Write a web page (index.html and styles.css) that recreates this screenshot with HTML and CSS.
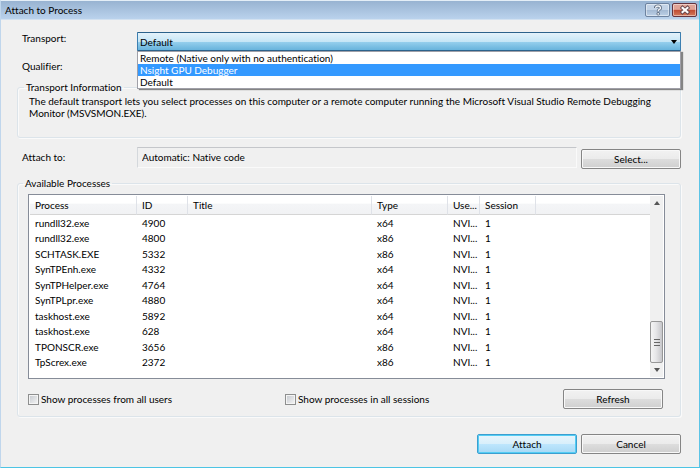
FILE: index.html
```html
<!doctype html>
<html lang="en">

    <head>
        <meta charset="UTF-8" />
        <title>Attach to Process</title>
        <link rel="stylesheet" href="styles.css">
    </head>

    <body>
        <form class="dialog">
            <div class="title_bar">
                <span>Attach to Process</span>
                <button type="button" class="win_btn help" aria-label="Help">
                    <svg width="12" height="12" viewBox="0 0 12 12">
                        <path d="M3.5 4V3.5Q3.8 2 6 2T8.5 3.9Q8.5 4.8 7.2 5.5 6.2 6 6.2 7.4" fill="none" stroke="#5c6a7e" stroke-width="3" />
                        <circle cx="6.2" cy="9.8" r="1.7" fill="#5c6a7e" />
                        <path d="M3.5 3.8Q3.8 2 6 2T8.5 3.9Q8.5 4.8 7.2 5.5 6.2 6 6.2 7.2" fill="none" stroke="#f4f7fb" stroke-width="1.4" />
                        <circle cx="6.2" cy="9.8" r="0.9" fill="#f4f7fb" />
                    </svg>
                </button>
                <button type="button" class="win_btn close" aria-label="Close">
                    <svg width="12" height="10" viewBox="0 0 12 10">
                        <path d="M3.5 2.8L8.5 7.2M8.5 2.8L3.5 7.2" stroke="#6b4a50" stroke-width="3.8" stroke-linecap="square" />
                        <path d="M3.5 2.8L8.5 7.2M8.5 2.8L3.5 7.2" stroke="#fff" stroke-width="2" stroke-linecap="square" />
                    </svg>
                </button>
            </div>

            <div class="content">
                <div class="field transport">
                    <label for="transport">Transport:</label>
                    <div class="combo">
                        <select id="transport">
                            <option>Default</option>
                        </select>
                        <ul class="drop_list">
                            <li>Remote (Native only with no authentication)</li>
                            <li class="active">Nsight GPU Debugger</li>
                            <li>Default</li>
                        </ul>
                    </div>
                </div>
                <div class="field qualifier">
                    <span>Qualifier:</span>
                </div>

                <fieldset class="info">
                    <legend>Transport Information</legend>
                    <p>The default transport lets you select processes on this computer or a remote computer running the Microsoft Visual Studio Remote Debugging Monitor (MSVSMON.EXE).</p>
                </fieldset>

                <div class="field attach_to">
                    <label for="attach">Attach to:</label>
                    <input type="text" id="attach" value="Automatic: Native code" readonly />
                    <button type="button" class="btn">Select...</button>
                </div>

                <fieldset class="processes">
                    <legend>Available Processes</legend>
                    <div class="list_view">
                        <table>
                            <thead>
                                <tr>
                                    <th class="name">Process</th>
                                    <th class="pid">ID</th>
                                    <th class="caption">Title</th>
                                    <th class="type">Type</th>
                                    <th class="user">Use...</th>
                                    <th class="session">Session</th>
                                    <th></th>
                                </tr>
                            </thead>
                            <tbody>
                                <tr><td>rundll32.exe</td><td>4900</td><td></td><td>x64</td><td>NVI...</td><td>1</td><td></td></tr>
                                <tr><td>rundll32.exe</td><td>4800</td><td></td><td>x86</td><td>NVI...</td><td>1</td><td></td></tr>
                                <tr><td>SCHTASK.EXE</td><td>5332</td><td></td><td>x86</td><td>NVI...</td><td>1</td><td></td></tr>
                                <tr><td>SynTPEnh.exe</td><td>4332</td><td></td><td>x64</td><td>NVI...</td><td>1</td><td></td></tr>
                                <tr><td>SynTPHelper.exe</td><td>4764</td><td></td><td>x64</td><td>NVI...</td><td>1</td><td></td></tr>
                                <tr><td>SynTPLpr.exe</td><td>4880</td><td></td><td>x64</td><td>NVI...</td><td>1</td><td></td></tr>
                                <tr><td>taskhost.exe</td><td>5892</td><td></td><td>x64</td><td>NVI...</td><td>1</td><td></td></tr>
                                <tr><td>taskhost.exe</td><td>628</td><td></td><td>x64</td><td>NVI...</td><td>1</td><td></td></tr>
                                <tr><td>TPONSCR.exe</td><td>3656</td><td></td><td>x86</td><td>NVI...</td><td>1</td><td></td></tr>
                                <tr><td>TpScrex.exe</td><td>2372</td><td></td><td>x86</td><td>NVI...</td><td>1</td><td></td></tr>
                            </tbody>
                        </table>
                        <div class="scrollbar">
                            <button type="button" aria-label="Scroll up">
                                <svg width="6" height="4" viewBox="0 0 6 4"><path d="M0 4L3 0 6 4z" fill="#555" /></svg>
                            </button>
                            <div class="track">
                                <div class="thumb">
                                    <svg width="6" height="7" viewBox="0 0 6 7"><path d="M0 .5h6M0 3.5h6M0 6.5h6" stroke="#666" /></svg>
                                </div>
                            </div>
                            <button type="button" aria-label="Scroll down">
                                <svg width="6" height="4" viewBox="0 0 6 4"><path d="M0 0L3 4 6 0z" fill="#555" /></svg>
                            </button>
                        </div>
                    </div>
                    <div class="options">
                        <label><input type="checkbox" />Show processes from all users</label>
                        <label><input type="checkbox" />Show processes in all sessions</label>
                        <button type="button" class="btn">Refresh</button>
                    </div>
                </fieldset>

                <div class="actions">
                    <button type="submit" class="btn primary">Attach</button>
                    <button type="button" class="btn">Cancel</button>
                </div>
            </div>
        </form>
    </body>

</html>
```

FILE: styles.css
```css
* {
    box-sizing: border-box;
    padding: 0px;
    margin: 0px;
}

body {
    font-size: 10px;
    line-height: 12px;
    font-family: Lato, "Open Sans", sans-serif;
    font-variant-ligatures: none;
    color: #000;
    background: #f0f0f0;
}

button,
input,
select {
    font: inherit;
    color: inherit;
}

.dialog {
    min-height: 100vh;
    border: 1px solid #c0d6ec;
    border-top-color: #e4eef7;
    border-right-color: #5cc4e6;
    border-bottom-color: #4cc4e4;
}

.title_bar {
    display: flex;
    align-items: center;
    gap: 2px;
    height: 19px;
    padding: 0 2px 0 4px;
    background: linear-gradient(#98b3d1, #bad2ec);
    border-bottom: 1px solid #d3e1f0;
}

.title_bar span {
    flex: 1;
}

.win_btn {
    display: flex;
    align-items: center;
    justify-content: center;
    width: 25px;
    height: 14px;
    border: 1px solid #6d83a0;
    border-radius: 2px;
    box-shadow: inset 0 0 0 1px rgba(255, 255, 255, 0.45);
    background: linear-gradient(#c3d3e6 50%, #a3b9d3 50%, #bcd0e6);
}

.win_btn.close {
    border-color: #64343f;
    background: linear-gradient(#e0a396 45%, #bf4a31 50%, #d27a5c);
}

.content {
    padding: 12px 18px 13px 16px;
}

.field {
    display: flex;
    align-items: center;
    padding-left: 5px;
}

.field > label {
    width: 115px;
}

.transport {
    align-items: flex-start;
}

.combo {
    position: relative;
    flex: 1;
}

.combo select {
    display: block;
    width: 100%;
    height: 19px;
    padding-left: 2px;
    border: 1px solid #3c7fb1;
    border-top-color: #2c628b;
    border-bottom-color: #2c628b;
    border-radius: 1px;
    appearance: none;
    background: linear-gradient(#e4f2fa, #c6e6f6 50%, #98d1ee 50%, #68b3dc);
}

.combo::after {
    content: "";
    position: absolute;
    top: 8px;
    right: 4px;
    border: 3px solid transparent;
    border-top: 4px solid #000;
    border-bottom: 0;
}

.drop_list {
    position: absolute;
    top: 19px;
    left: 0;
    right: 0;
    z-index: 10;
    list-style: none;
    border: 1px solid #a0a0a8;
    background: #fff;
    box-shadow: 2px 1px 1px rgba(0, 0, 0, 0.45);
}

.drop_list li {
    padding-left: 2px;
}

.drop_list .active {
    color: #fff;
    background: #3399ff;
}

.qualifier {
    height: 30px;
}

fieldset {
    min-width: 0;
    border: 1px solid #dce4ea;
    border-radius: 3px;
    box-shadow: inset 1px 1px #fafafa, 1px 1px #fafafa;
}

legend {
    margin-left: -5px;
    padding: 0 2px;
}

.info {
    height: 57px;
    padding: 2px 20px 2px 11px;
}

.attach_to {
    align-items: flex-start;
    gap: 4px;
    height: 22px;
    margin: 9px 0 8px;
}

.attach_to label {
    width: 111px;
    line-height: 20px;
}

.attach_to input {
    flex: 1;
    min-width: 0;
    height: 21px;
    padding: 0 4px 2px;
    border: 1px solid #fafafa;
    border-top-color: #c4c6ca;
    border-left-color: #d4d8dc;
    background: #f0f0f0;
}

.attach_to .btn {
    align-self: flex-end;
}

.btn {
    width: 100px;
    height: 20px;
    border: 1px solid #858585;
    border-radius: 2px;
    box-shadow: inset 0 0 0 1px #f8f8f8;
    background: linear-gradient(#f2f2f2, #ebebeb 50%, #dddddd 50%, #cfcfcf);
}

.btn.primary {
    border-color: #3c9fd0;
    box-shadow: inset 0 0 0 1px #54cdf4;
    background: linear-gradient(#e8f5fc, #d8effb 50%, #bee6fd 50%, #a7d9f5);
}

.processes {
    padding: 5px 15px 7px 10px;
}

.list_view {
    display: flex;
    height: 185px;
    padding: 1px;
    border: 1px solid #868c98;
    background: #fff;
}

.list_view table {
    flex: 1;
    min-width: 0;
    height: 0;
    border-collapse: separate;
    border-spacing: 0;
    table-layout: fixed;
}

th {
    height: 19px;
    padding-left: 5px;
    border-right: 1px solid #dfe2e8;
    border-bottom: 1px solid #d5d5d5;
    background: linear-gradient(#fff 40%, #f4f5f7 45%, #f1f2f4);
    font-weight: normal;
    text-align: left;
}

th:last-child {
    border-right: 0;
}

.name {
    width: 107px;
}

.pid {
    width: 51px;
}

.caption {
    width: 184px;
}

.type {
    width: 76px;
}

.user {
    width: 32px;
}

.session {
    width: 56px;
}

td {
    height: 15px;
    padding-left: 5px;
    white-space: nowrap;
}

tr:nth-child(even) td {
    height: 16px;
}

.scrollbar {
    display: flex;
    flex-direction: column;
    width: 13px;
    background: #f0f0f0;
}

.scrollbar button {
    display: flex;
    align-items: center;
    justify-content: center;
    height: 14px;
    border: 0;
    background: #f0f0f0;
}

.track {
    display: flex;
    flex: 1;
    align-items: flex-end;
}

.thumb {
    display: flex;
    align-items: center;
    justify-content: center;
    width: 100%;
    height: 42px;
    border: 1px solid #979797;
    border-radius: 2px;
    background: linear-gradient(90deg, #f5f5f5, #e6e6e8 45%, #c6c6ca);
}

.options {
    display: flex;
    align-items: center;
    margin-top: 10px;
    padding-right: 2px;
}

.options label {
    display: flex;
    align-items: center;
    gap: 2px;
    flex: 0 0 257px;
}

.options label + label {
    flex: 1;
}

input[type='checkbox'] {
    width: 11px;
    height: 11px;
    border: 1px solid #8e8f8f;
    box-shadow: inset 0 0 0 1px #f4f4f4;
    appearance: none;
    background: linear-gradient(135deg, #c4c8ce, #f6f6f6);
}

.actions {
    display: flex;
    justify-content: flex-end;
    gap: 4px;
    margin-top: 17px;
}
```
